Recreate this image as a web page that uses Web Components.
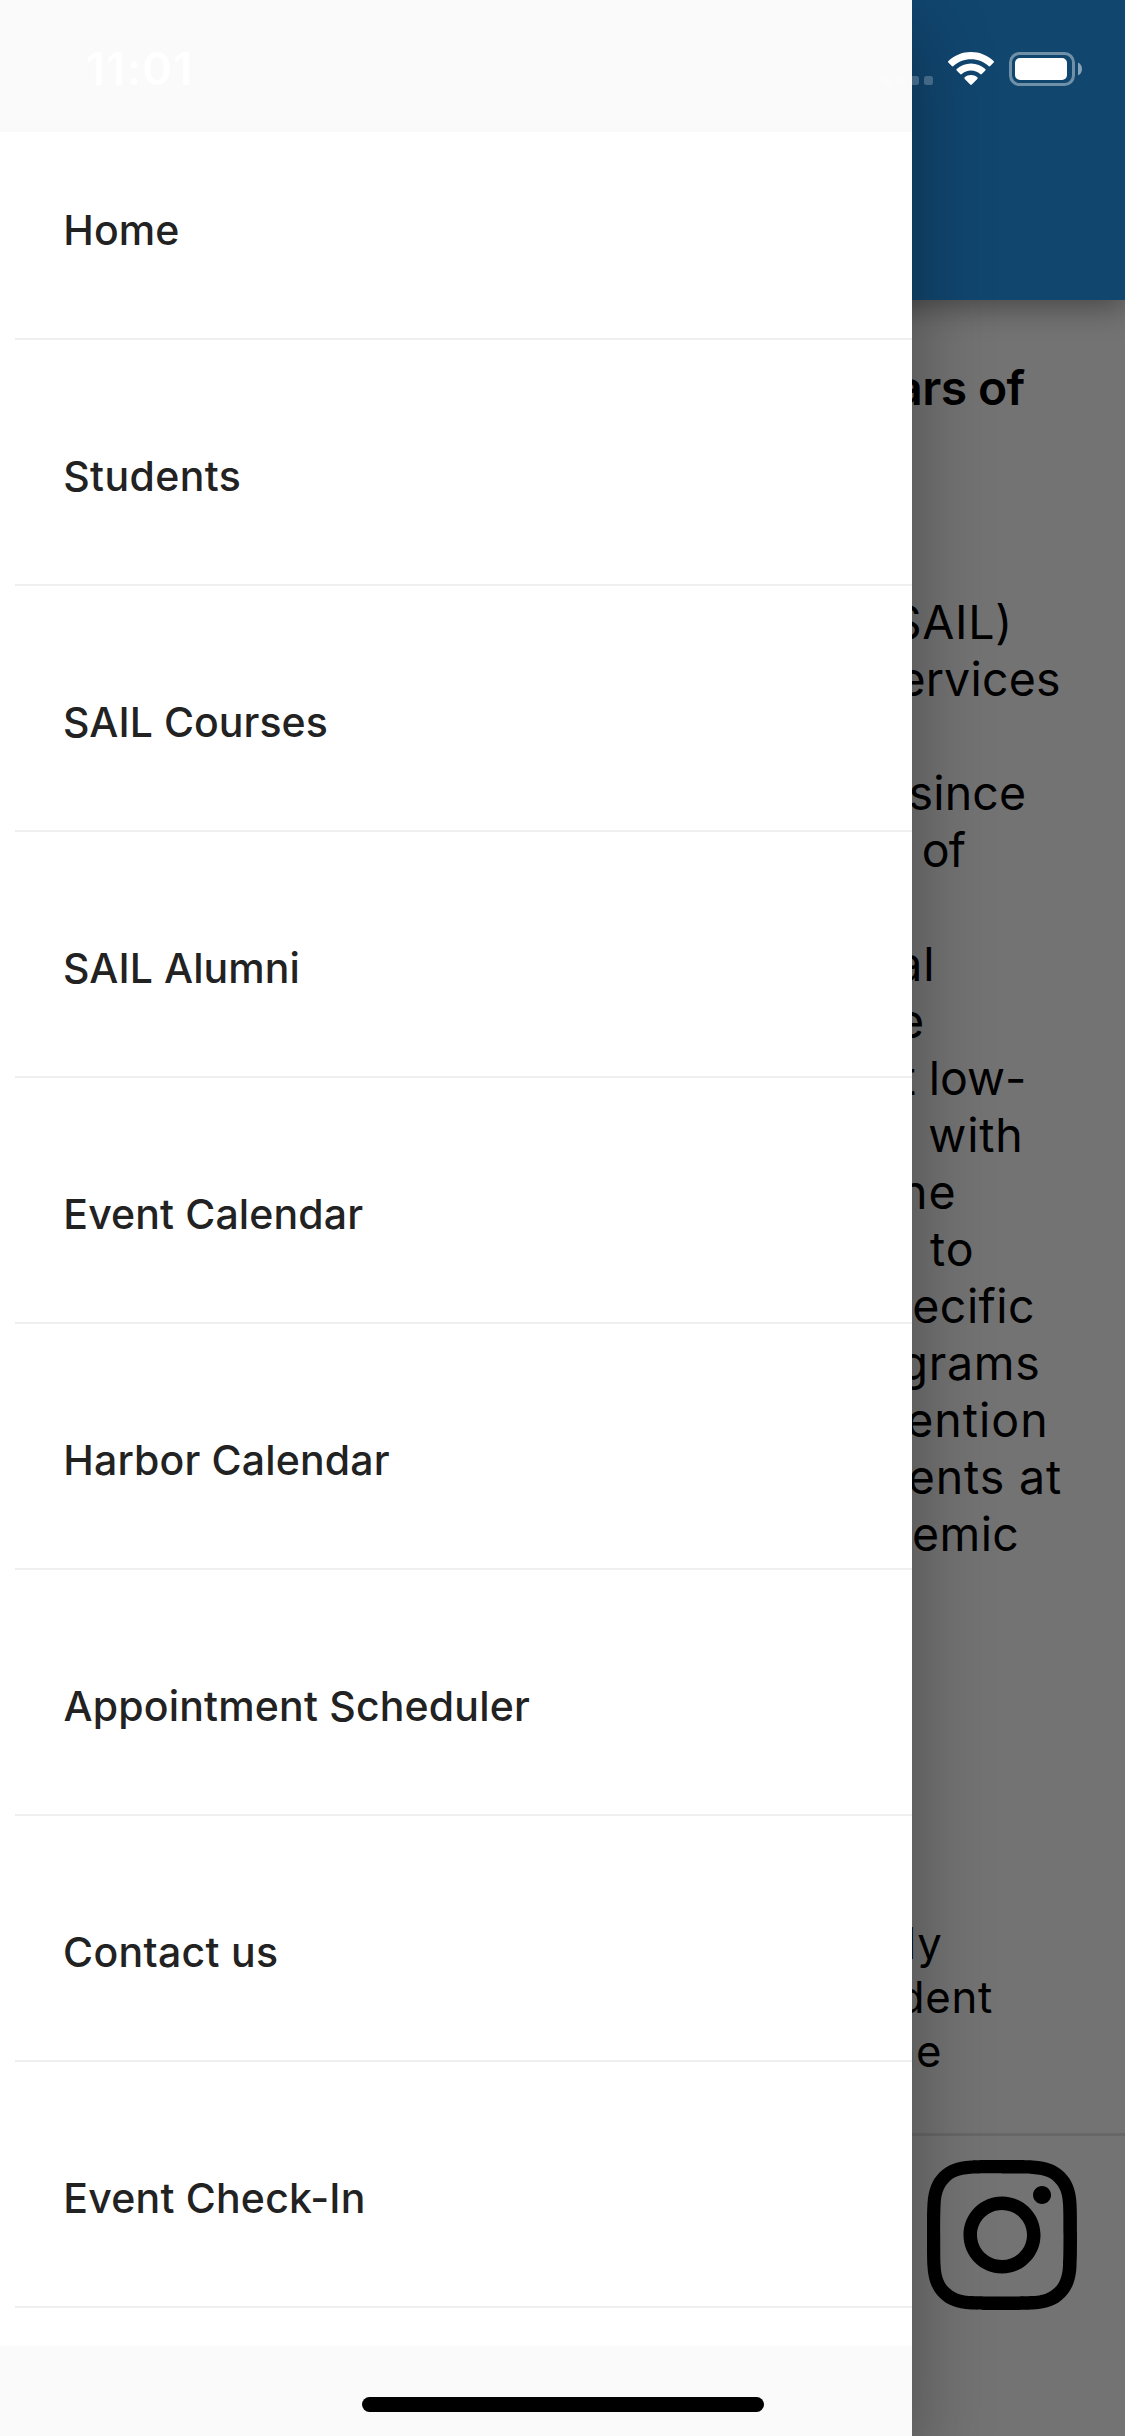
<!DOCTYPE html>
<html lang="en">
<head>
<meta charset="utf-8">
<title>SAIL</title>
<style>
html, body { margin: 0; padding: 0; }
body { font-family: Inter, "Liberation Sans", sans-serif; background: #737373; }
</style>
</head>
<body>
<sail-app></sail-app>
<script>
const define = (name, html, extra) => {
  const tpl = document.createElement('template');
  tpl.innerHTML = html;
  customElements.define(name, class extends HTMLElement {
    constructor() {
      super();
      this.attachShadow({ mode: 'open' }).append(tpl.content.cloneNode(true));
    }
    connectedCallback() { if (extra) extra(this); }
  });
};

/* One line of text, tracked so that its ink spans left..right.
   "from" is the index of the first character that counts. */
const ctx = document.createElement('canvas').getContext('2d');
define('ink-text', `<style>:host { display: block; white-space: pre; }</style><slot></slot>`, el => {
  const text = el.textContent, from = +(el.getAttribute('from') || 0);
  const left = +el.getAttribute('left'), right = +el.getAttribute('right');
  const cs = getComputedStyle(el);
  ctx.font = cs.fontWeight + ' ' + cs.fontSize + ' ' + cs.fontFamily;
  const part = text.slice(from), m = ctx.measureText(part);
  const natural = m.actualBoundingBoxRight + m.actualBoundingBoxLeft;
  const n = part.length - 1;
  const ls = n > 0 ? (right - left - natural) / n : 1;
  const lead = ctx.measureText(text.slice(0, from)).width + from * ls;
  el.style.letterSpacing = ls.toFixed(3) + 'px';
  el.style.textIndent = (left + m.actualBoundingBoxLeft - lead).toFixed(2) + 'px';
});

define('wifi-icon', `
<style>:host { display: block; width: 46px; height: 33px; } svg { display: block; }</style>
<svg width="46" height="33" viewBox="0 0 46 33" fill="#fff">
<path d="M23 0C14.300 0 6.300 3.400.4 9c-.5.500-.5 1.100-.1 1.600l3.500 3.500c.5.500 1.100.500 1.600 0C10 9.800 16.200 7.200 23 7.200s13 2.600 17.600 6.900c.5.500 1.100.500 1.600 0l3.500-3.500c.4-.5.400-1.100-.1-1.600C39.700 3.400 31.700 0 23 0z"/>
<path d="M23 11.500c-5.500 0-10.500 2.100-14.300 5.500-.5.500-.5 1.100 0 1.600l3.500 3.500c.4.400 1.100.500 1.600 0 2.400-2.200 5.700-3.500 9.200-3.500s6.800 1.300 9.200 3.500c.5.500 1.200.400 1.600 0l3.500-3.500c.5-.5.500-1.100 0-1.600-3.800-3.400-8.800-5.500-14.300-5.500z"/>
<path d="M23 23c-2.400 0-4.600.9-6.300 2.300-.5.500-.5 1.100 0 1.600l5.500 5.600c.5.500 1.100.500 1.600 0l5.500-5.600c.5-.5.500-1.100 0-1.600C27.600 23.900 25.400 23 23 23z"/>
</svg>`);

define('battery-icon', `
<style>:host { display: block; width: 74px; height: 34px; } svg { display: block; }</style>
<svg width="74" height="34" viewBox="0 0 74 34">
<rect x="1.500" y="1.500" width="63" height="31" rx="9" fill="none" stroke="#fff" stroke-opacity=".4" stroke-width="3"/>
<rect x="6" y="6" width="52" height="22" rx="5" fill="#fff"/>
<path d="M69 10.500c2.400 1 4 3.500 4 6.400s-1.600 5.400-4 6.400z" fill="#fff" fill-opacity=".5"/>
</svg>`);

define('status-bar', `
<style>
:host { display: flex; height: 132px; color: #fff; font-size: 45px; line-height: 54px; font-weight: 600; }
.time { flex: 1; padding-top: 42px; }
.right { display: flex; align-items: flex-start; padding: 52px 42px 0 0; }
.dots { display: flex; gap: 5px; padding: 24px 15px 0 0; }
.dots i { width: 9px; height: 9px; border-radius: 2.500px; background: rgba(255,255,255,.22); }
battery-icon { margin-left: 15px; }
</style>
<div class="time"><ink-text left="88" right="189.3">11:01</ink-text></div>
<div class="right"><div class="dots"><i></i><i></i><i></i><i></i></div><wifi-icon></wifi-icon><battery-icon></battery-icon></div>`);

define('instagram-icon', `
<style>:host { display: block; width: 150px; height: 150px; } svg { display: block; }</style>
<svg width="150" height="150" viewBox="0 0 24 24"><path d="M12 0C8.74 0 8.333.015 7.053.072 5.775.132 4.905.333 4.140.63c-.789.306-1.459.717-2.126 1.384S.935 3.350.63 4.140C.333 4.905.131 5.775.072 7.053.012 8.333 0 8.740 0 12s.015 3.667.072 4.947c.06 1.277.261 2.148.558 2.913.306.788.717 1.459 1.384 2.126.667.666 1.336 1.079 2.126 1.384.766.296 1.636.499 2.913.558C8.333 23.988 8.740 24 12 24s3.667-.015 4.947-.072c1.277-.06 2.148-.262 2.913-.558.788-.306 1.459-.718 2.126-1.384.666-.667 1.079-1.335 1.384-2.126.296-.765.499-1.636.558-2.913.06-1.280.072-1.687.072-4.947s-.015-3.667-.072-4.947c-.06-1.277-.262-2.149-.558-2.913-.306-.789-.718-1.459-1.384-2.126C21.319 1.347 20.651.935 19.860.63c-.765-.297-1.636-.499-2.913-.558C15.667.012 15.260 0 12 0zm0 2.160c3.203 0 3.585.016 4.850.071 1.170.055 1.805.249 2.227.415.562.217.96.477 1.382.896.419.42.679.819.896 1.381.164.422.36 1.057.413 2.227.057 1.266.07 1.646.07 4.850s-.015 3.585-.074 4.850c-.061 1.170-.256 1.805-.421 2.227-.224.562-.479.96-.899 1.382-.419.419-.824.679-1.380.896-.42.164-1.065.36-2.235.413-1.274.057-1.649.07-4.859.07-3.211 0-3.586-.015-4.859-.074-1.171-.061-1.816-.256-2.236-.421-.569-.224-.96-.479-1.379-.899-.421-.419-.69-.824-.9-1.380-.165-.42-.359-1.065-.42-2.235-.045-1.260-.061-1.649-.061-4.844 0-3.196.016-3.586.061-4.861.061-1.170.255-1.814.42-2.234.21-.57.479-.96.9-1.381.419-.419.81-.689 1.379-.898.42-.166 1.051-.361 2.221-.421 1.275-.045 1.650-.06 4.859-.06l.045.03zm0 3.678c-3.405 0-6.162 2.760-6.162 6.162 0 3.405 2.760 6.162 6.162 6.162 3.405 0 6.162-2.760 6.162-6.162 0-3.405-2.760-6.162-6.162-6.162zM12 16c-2.210 0-4-1.790-4-4s1.790-4 4-4 4 1.790 4 4-1.790 4-4 4zm7.846-10.405c0 .795-.646 1.440-1.440 1.440-.795 0-1.440-.646-1.440-1.440 0-.794.646-1.439 1.440-1.439.793-.001 1.440.645 1.440 1.439z"/></svg>`);

define('menu-item', `
<style>
:host { display: block; box-sizing: border-box; height: 246px; padding-top: 111px; flex: none; }
:host([first]) { height: 208px; padding-top: 73px; }
.label { height: 133px; line-height: 51px; }
.rule { height: 2px; margin-left: 15px; background: #efefef; }
</style>
<div class="label"><slot></slot></div><div class="rule"></div>`);

define('nav-drawer', `
<style>
:host { display: flex; flex-direction: column; width: 912px; height: 2436px; background: #fafafa; box-shadow: 0 30px 76px rgba(0,0,0,.33); }
nav { margin-top: 132px; height: 2214px; background: #fff; overflow: hidden; display: flex; flex-direction: column; font-size: 41px; font-weight: 450; color: #222; }
</style>
<nav><slot></slot></nav>`);

define('home-page', `
<style>
:host { display: flex; flex-direction: column; height: 2436px; background: #737373; color: #000; overflow: hidden; }
header { flex: none; height: 300px; background: #11466f; box-shadow: 0 8px 28px rgba(0,0,0,.36); }
h1 { margin: 59px 0 178px; font-size: 48px; line-height: 57px; font-weight: 600; }
.body { font-size: 46.500px; line-height: 57px; }
.note { margin-top: 354px; font-size: 43.700px; line-height: 54px; }
.body ink-text { height: 57px; }
footer { display: flex; justify-content: flex-end; margin-top: 54px; padding: 24px 48px 0 0; border-top: 3px solid #676767; }
</style>
<header></header>
<h1><ink-text from="1" left="925.3" right="1025.5">ars of</ink-text></h1>
<div class="body">
<ink-text from="1" left="923.3" right="1007.3">SAIL)</ink-text>
<ink-text from="1" left="928.7" right="1059">ervices</ink-text>
<ink-text></ink-text>
<ink-text from="1" left="935.3" right="1024">since</ink-text>
<ink-text left="923.7" right="965.7">of</ink-text>
<ink-text></ink-text>
<ink-text from="1" left="926.3" right="931">al</ink-text>
<ink-text left="899" right="922">e</ink-text>
<ink-text from="2" left="931.7" right="1024">t low-</ink-text>
<ink-text left="929.3" right="1019.3">with</ink-text>
<ink-text from="1" left="930.5" right="953.3">he</ink-text>
<ink-text left="930" right="971.7">to</ink-text>
<ink-text left="914.3" right="1033">ecific</ink-text>
<ink-text from="1" left="931.7" right="1038.3">grams</ink-text>
<ink-text from="1" left="937.3" right="1044.3">ention</ink-text>
<ink-text from="1" left="938.7" right="1061">ents at</ink-text>
<ink-text left="914" right="1017.3">emic</ink-text>
</div>
<div class="note">
<ink-text from="1" left="918" right="940">ly</ink-text>
<ink-text from="1" left="927.3" right="992">dent</ink-text>
<ink-text from="1" left="918" right="940">he</ink-text>
</div>
<footer><instagram-icon></instagram-icon></footer>`);

define('sail-app', `
<style>
:host { display: block; position: relative; width: 1125px; height: 2436px; overflow: hidden; }
nav-drawer { position: absolute; left: 0; top: 0; }
status-bar { position: absolute; left: 0; top: 0; width: 1125px; }
.indicator { position: absolute; left: 362px; top: 2397px; width: 402px; height: 15px; border-radius: 7.500px; background: #000; }
</style>
<home-page></home-page>
<nav-drawer>
<menu-item first><ink-text left="66.3" right="178.2">Home</ink-text></menu-item>
<menu-item><ink-text left="65.2" right="239.7">Students</ink-text></menu-item>
<menu-item><ink-text left="65" right="326.7">SAIL Courses</ink-text></menu-item>
<menu-item><ink-text left="65" right="297.5">SAIL Alumni</ink-text></menu-item>
<menu-item><ink-text left="66.3" right="362.2">Event Calendar</ink-text></menu-item>
<menu-item><ink-text left="66.3" right="388.700">Harbor Calendar</ink-text></menu-item>
<menu-item><ink-text left="64.500" right="529">Appointment Scheduler</ink-text></menu-item>
<menu-item><ink-text left="65" right="277">Contact us</ink-text></menu-item>
<menu-item><ink-text left="66.3" right="362.7">Event Check-In</ink-text></menu-item>
</nav-drawer>
<status-bar></status-bar>
<div class="indicator"></div>`);
</script>
</body>
</html>
